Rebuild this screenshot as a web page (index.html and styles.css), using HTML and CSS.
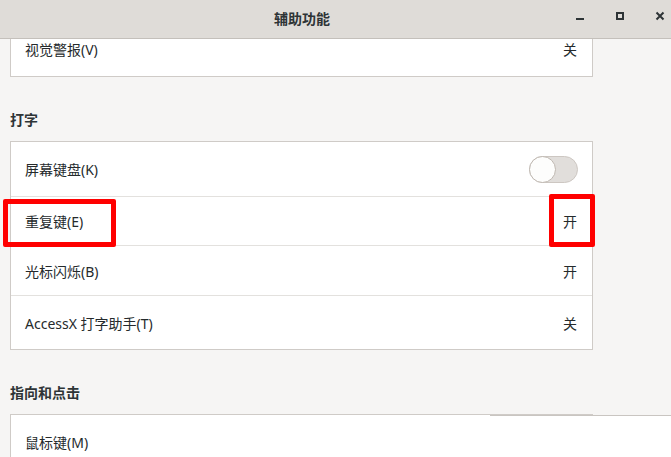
FILE: index.html
```html
<!DOCTYPE html>
<html lang="zh-CN">
<head>
<meta charset="utf-8">
<title>辅助功能</title>
<link rel="stylesheet" href="styles.css">
</head>
<body>
<div class="window">
  <header class="titlebar">
    <div class="title">辅助功能</div>
    <div class="controls">
      <span class="ctl">
        <svg width="10" height="10" viewBox="0 0 10 10"><rect x="1" y="7" width="8" height="2" fill="#2e3436"/></svg>
      </span>
      <span class="ctl">
        <svg width="10" height="10" viewBox="0 0 10 10"><rect x="2" y="2" width="6" height="6" fill="none" stroke="#2e3436" stroke-width="2"/></svg>
      </span>
      <span class="ctl">
        <svg width="10" height="10" viewBox="0 0 10 10"><path d="M1.5 1.5 L8.5 8.5 M8.5 1.5 L1.5 8.5" stroke="#2e3436" stroke-width="2"/></svg>
      </span>
    </div>
  </header>
  <main class="content">
    <section class="card card-top">
      <div class="row row-a"><span>视觉警报(V)</span><span class="val">关</span></div>
    </section>

    <h2 class="heading">打字</h2>
    <section class="card">
      <div class="row row-1"><span>屏幕键盘(K)</span><span class="switch"><span class="knob"></span></span></div>
      <div class="row row-2 sep"><span>重复键(E)</span><span class="val">开</span></div>
      <div class="row row-3 sep"><span>光标闪烁(B)</span><span class="val">开</span></div>
      <div class="row row-4 sep"><span>AccessX 打字助手(T)</span><span class="val">关</span></div>
    </section>

    <h2 class="heading">指向和点击</h2>
    <section class="card">
      <div class="row row-1"><span>鼠标键(M)</span></div>
    </section>
  </main>
  <div class="popover"></div>
  <div class="mark mark-left"></div>
  <div class="mark mark-right"></div>
</div>
</body>
</html>
```

FILE: styles.css
```css
html, body {
  margin: 0;
  padding: 0;
}
body {
  width: 671px;
  height: 457px;
  overflow: hidden;
  background: #f6f5f4;
  font-family: "Noto Sans", "Noto Sans CJK SC", sans-serif;
  font-size: 14px;
  color: #252a2c;
}
.window {
  position: relative;
  width: 671px;
  height: 457px;
  overflow: hidden;
}
.titlebar {
  height: 39px;
  box-sizing: border-box;
  background: #dfdcd8;
  border-bottom: 1px solid #c4c0bb;
  display: grid;
  grid-template-columns: 1fr;
  align-items: center;
}
.title {
  grid-area: 1 / 1;
  text-align: center;
  padding-right: 67px;
  padding-bottom: 2px;
  font-weight: 700;
  font-size: 14px;
  color: #2e3436;
}
.controls {
  grid-area: 1 / 1;
  justify-self: end;
  display: flex;
  gap: 18px;
  margin-bottom: 6px;
}
.ctl {
  width: 22px;
  height: 10px;
  display: flex;
  justify-content: center;
}
.ctl svg { display: block; }

.content {
  height: 418px;
  overflow: hidden;
  padding-left: 10px;
}
.card {
  width: 583px;
  box-sizing: border-box;
  background: #fff;
  border: 1px solid #cfcbc7;
}
.card-top {
  margin-top: -14px;
}
.row {
  display: flex;
  align-items: center;
  justify-content: space-between;
  padding: 0 14px;
  box-sizing: border-box;
}
.sep { border-top: 1px solid #e3e1de; }
.row-a { height: 50px; padding-bottom: 5px; }
.row-1 { height: 54px; }
.row-2 { height: 49px; }
.row-3 { height: 50px; }
.row-4 { height: 54px; }
.val { margin-right: 1px; }

.heading {
  margin: 33px 0 11px;
  font-size: 14px;
  line-height: 20px;
  font-weight: 700;
  color: #2e3436;
}

.switch {
  width: 49px;
  height: 27px;
  box-sizing: border-box;
  border-radius: 14px;
  background: #e1dedb;
  border: 1px solid #cdc7c2;
  position: relative;
}
.knob {
  position: absolute;
  left: -1px;
  top: -1px;
  width: 27px;
  height: 27px;
  box-sizing: border-box;
  border-radius: 50%;
  background: #fdfdfc;
  border: 1px solid #bfb8b1;
}

.popover {
  position: absolute;
  left: 490px;
  top: 415px;
  right: 0;
  bottom: 0;
  background: #fff;
  border-top: 1px solid #c9c5c1;
}

.mark {
  position: absolute;
  box-sizing: border-box;
  border: 5px solid #ff0000;
  border-radius: 2px;
}
.mark-left {
  left: 3px;
  top: 199px;
  width: 113px;
  height: 48px;
}
.mark-right {
  left: 549px;
  top: 194px;
  width: 46px;
  height: 53px;
}
```
